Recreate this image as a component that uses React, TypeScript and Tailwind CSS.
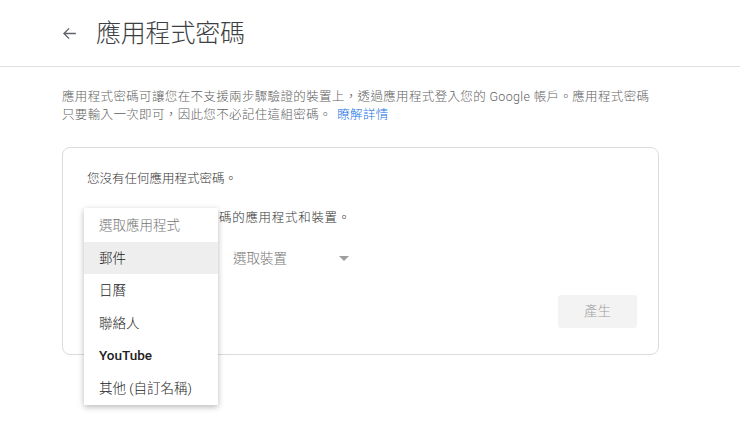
import React from "react";

const font = { fontFamily: 'Roboto, "Noto Sans CJK TC", "Noto Sans", sans-serif' };

const apps = ["郵件", "日曆", "聯絡人", "YouTube", "其他 (自訂名稱)"];

function Caret() {
	return (
		<svg width="10" height="5" viewBox="0 0 10 5">
			<path d="M0 0h10L5 5z" fill="#9e9e9e" />
		</svg>
	);
}

export default function App() {
	return (
		<div className="min-h-[424px] w-[740px] bg-white" style={font}>
			{/* header */}
			<div className="flex h-[67px] items-center border-b border-[#e0e0e0] pl-[60px]">
				<svg width="19" height="19" viewBox="0 0 24 24" className="mt-[1px]">
					<path
						d="M20 12H5M11.5 5.5 5 12l6.5 6.5"
						fill="none"
						stroke="#5f6368"
						strokeWidth="1.7"
					/>
				</svg>
				<h1 className="ml-[17px] text-[25px] font-light leading-none tracking-[-0.2px] text-[#3c4043]">
					應用程式密碼
				</h1>
			</div>

			<p className="mt-[21px] px-[62px] text-[12.5px] font-light leading-[18px] tracking-[0.35px] text-[#5f5f5f]">
				應用程式密碼可讓您在不支援兩步驟驗證的裝置上，透過應用程式登入您的 Google
				帳戶。應用程式密碼
				<br />
				只要輸入一次即可，因此您不必記住這組密碼。{" "}
				<a className="ml-[2px] text-[#1a73e8]">瞭解詳情</a>
			</p>

			{/* card */}
			<div className="relative ml-[62px] mt-[23px] w-[597px] rounded-lg border border-[#dadce0] pb-[26px] pl-6 pr-[21px] pt-[22px]">
				<p className="text-[12.5px] font-light leading-[18px] text-[#333333]">您沒有任何應用程式密碼。</p>
				<p className="mt-[21px] text-[12.5px] font-light leading-[18px] tracking-[0.7px] text-[#333333]">
					選取要產生應用程式密碼的應用程式和裝置。
				</p>

				<div className="mt-[15px] flex h-8 items-center text-[13.5px] font-light">
					<div className="flex w-[146px] items-center text-[#757575]">選取應用程式</div>
					<div className="flex w-[116px] items-center justify-between text-[#757575]">
						<span>選取裝置</span>
						<Caret />
					</div>
				</div>

				<div className="mt-[21px] flex justify-end">
					<button className="h-[33px] w-[79px] rounded-[3px] bg-[#f3f3f3] text-[13.5px] font-light text-[#a0a0a0]">
						產生
					</button>
				</div>

				{/* open app menu */}
				<div className="absolute left-[21px] top-[60px] w-[134px] bg-white py-[1px] shadow-[0_2px_6px_rgba(0,0,0,0.28)]">
					<div className="flex h-[32.5px] items-center pl-[15px] text-[13.5px] font-light text-[#757575]">
						選取應用程式
					</div>
					{apps.map((a, i) => (
						<div
							key={a}
							className={`flex h-[32.5px] items-center pl-[15px] text-[13.5px] text-[#212121] ${
								i === 0 ? "bg-[#eeeeee]" : ""
							} ${a === "YouTube" ? "font-medium" : "font-light"}`}
						>
							{a}
						</div>
					))}
				</div>
			</div>
		</div>
	);
}
